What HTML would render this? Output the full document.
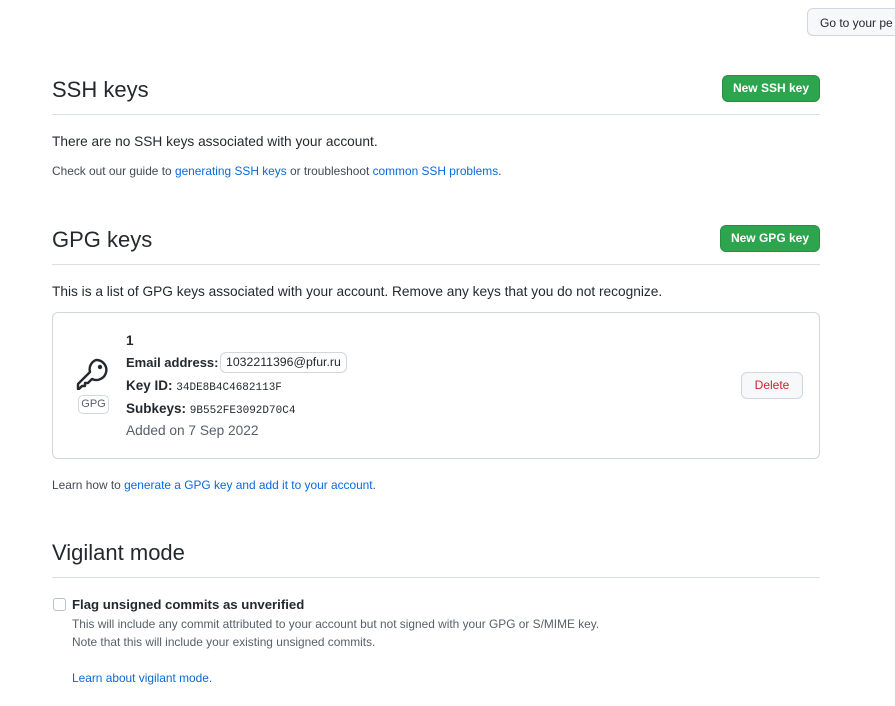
<!DOCTYPE html>
<html><head><style>
body{margin:0;width:895px;height:706px;background:#fff;font-family:"Liberation Sans",sans-serif;color:#24292f;position:relative;overflow:hidden}
.a{position:absolute;white-space:nowrap}
a{color:#0969da;text-decoration:none}
h2{position:absolute;margin:0;font-weight:400;font-size:22px;left:52px}
.hr{position:absolute;left:52px;width:768px;height:1px;background:#d8dee4}
.btn{position:absolute;background:#2da44e;color:#fff;font-weight:bold;font-size:12px;border-radius:6px;border:1px solid #288f43;text-align:center;box-sizing:border-box}
.s{font-size:11.9px}
.mono{font-family:"Liberation Mono",monospace;font-size:11px}
</style></head><body>
<div class="a" style="left:807px;top:8px;width:100px;height:28px;border:1px solid #d0d7de;border-radius:6px;background:#f6f8fa;box-sizing:border-box;font-size:12px;padding:7px 0 0 12px">Go to your pe</div>

<h2 style="top:77px">SSH keys</h2>
<div class="btn" style="left:722px;top:75px;width:98px;height:27px;line-height:25px">New SSH key</div>
<div class="hr" style="top:114px"></div>
<div class="a" style="left:52px;top:134px;font-size:13.7px">There are no SSH keys associated with your account.</div>
<div class="a s" style="left:52px;top:164px;color:#424a53">Check out our guide to <a>generating SSH keys</a> or troubleshoot <a>common SSH problems</a>.</div>

<h2 style="top:227px">GPG keys</h2>
<div class="btn" style="left:720px;top:225px;width:100px;height:27px;line-height:25px">New GPG key</div>
<div class="hr" style="top:264px"></div>
<div class="a" style="left:52px;top:284px;font-size:13.7px">This is a list of GPG keys associated with your account. Remove any keys that you do not recognize.</div>

<div class="a" style="left:52px;top:312px;width:768px;height:147px;border:1px solid #d0d7de;border-radius:6px;box-sizing:border-box"></div>
<svg class="a" style="left:76px;top:356px" width="34" height="34" viewBox="0 0 34 34" fill="none" stroke="#24292f" stroke-width="2.4" stroke-linejoin="round" stroke-linecap="round">
<path d="M20 4a10 10 0 1 1-4 19l-4 4h-3v3h-3l-3 3h-1v-5l12-12a10 10 0 0 1 6-12z"/><circle cx="24" cy="11" r="2.2" fill="#24292f" stroke="none"/>
</svg>
<div class="a" style="left:78px;top:395px;width:31px;height:19px;border:1px solid #d0d7de;border-radius:5px;box-sizing:border-box;font-size:11px;color:#57606a;text-align:center;line-height:17px">GPG</div>
<div class="a" style="left:126px;top:333px;font-size:13.5px;font-weight:bold">1</div>
<div class="a" style="left:126px;top:355px;font-size:13px;font-weight:bold">Email address:</div>
<div class="a" style="left:220px;top:352px;height:21px;border:1px solid #d0d7de;border-radius:6px;box-sizing:border-box;padding:0 5px;font-size:12.3px;line-height:19px">1032211396@pfur.ru</div>
<div class="a" style="left:126px;top:378px;font-size:13.5px"><b>Key ID:</b> <span class="mono">34DE8B4C4682113F</span></div>
<div class="a" style="left:126px;top:401px;font-size:13.5px"><b>Subkeys:</b> <span class="mono">9B552FE3092D70C4</span></div>
<div class="a" style="left:126px;top:423px;font-size:13.7px;color:#57606a">Added on 7 Sep 2022</div>
<div class="a" style="left:741px;top:372px;width:62px;height:27px;border:1px solid #d0d7de;border-radius:6px;background:#f6f8fa;box-sizing:border-box;color:#cf222e;font-size:12px;text-align:center;line-height:25px">Delete</div>

<div class="a s" style="left:52px;top:478px;color:#424a53">Learn how to <a>generate a GPG key and add it to your account</a>.</div>

<h2 style="top:540px">Vigilant mode</h2>
<div class="hr" style="top:577px"></div>
<div class="a" style="left:53px;top:598px;width:13px;height:13px;border:1px solid #b8bfc6;border-radius:3px;box-sizing:border-box"></div>
<div class="a" style="left:72px;top:597px;font-size:13.2px;font-weight:bold">Flag unsigned commits as unverified</div>
<div class="a s" style="left:72px;top:617px;color:#57606a">This will include any commit attributed to your account but not signed with your GPG or S/MIME key.</div>
<div class="a s" style="left:72px;top:635px;color:#57606a">Note that this will include your existing unsigned commits.</div>
<div class="a s" style="left:72px;top:671px"><a>Learn about vigilant mode.</a></div>
</body></html>
